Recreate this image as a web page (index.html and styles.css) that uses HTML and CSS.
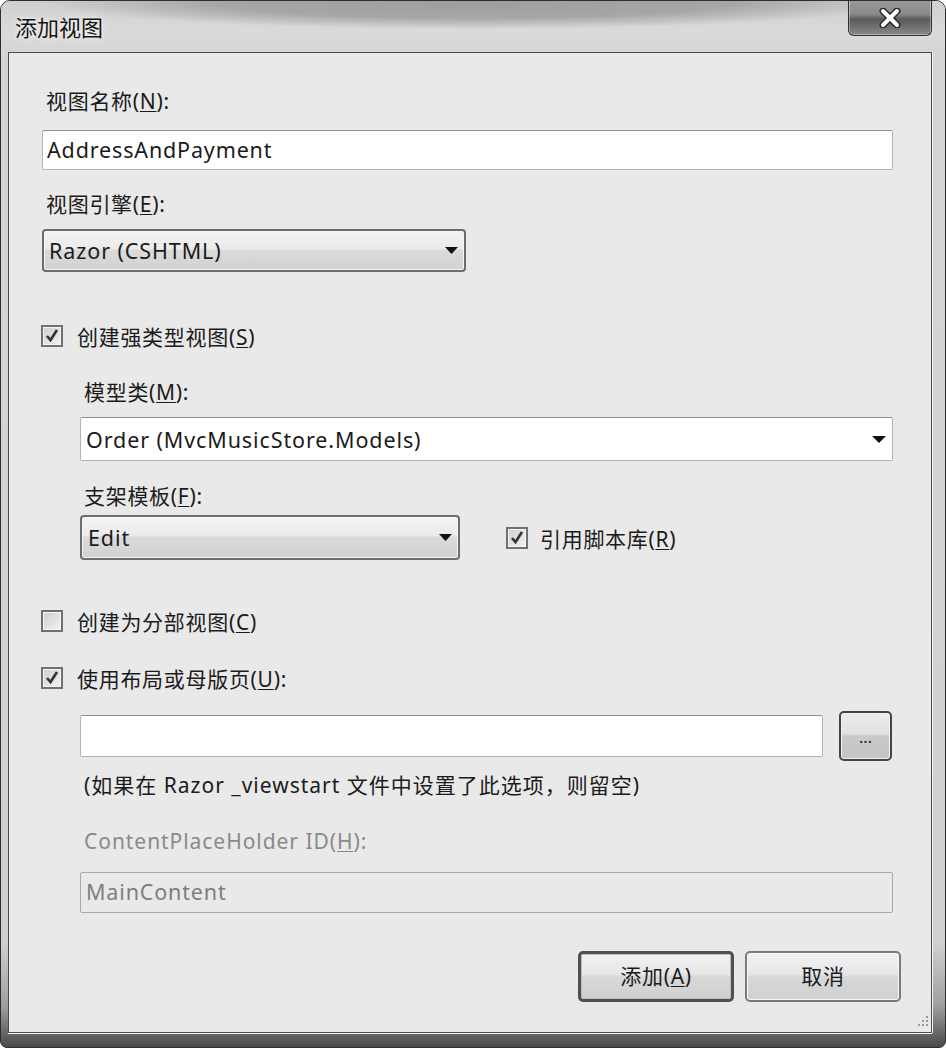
FILE: index.html
```html
<!DOCTYPE html>
<html lang="zh-CN">
<head>
<meta charset="utf-8">
<title>添加视图</title>
<link rel="stylesheet" href="styles.css">
</head>
<body>
<div class="window">
  <div class="titlebar">
    <span class="title">添加视图</span>
    <div class="close">
      <svg width="24" height="20" viewBox="0 0 24 20">
        <path d="M5 3 L19 17 M19 3 L5 17" stroke="#2a2a2a" stroke-width="7" stroke-linecap="round"/>
        <path d="M5 3 L19 17 M19 3 L5 17" stroke="#fff" stroke-width="4" stroke-linecap="round"/>
      </svg>
    </div>
  </div>
  <div class="client">
    <div class="label">视图名称(<u>N</u>):</div>
    <div class="textbox tb-name">AddressAndPayment</div>
    <div class="label l-engine">视图引擎(<u>E</u>):</div>
    <div class="select sel-engine">
      <span>Razor (CSHTML)</span>
      <svg class="arrow" width="13" height="7" viewBox="0 0 13 7"><path d="M0 0 H13 L6.5 7 Z" fill="#111"/></svg>
    </div>
    <div class="check row-strong"><span class="box checked"><svg width="16" height="16" viewBox="0 0 16 16"><path d="M3 8 L6.5 12 L13 2" stroke="#333" stroke-width="2.6" fill="none"/></svg></span><span>创建强类型视图(<u>S</u>)</span></div>
    <div class="indent">
      <div class="label l-model">模型类(<u>M</u>):</div>
      <div class="combo">
        <span>Order (MvcMusicStore.Models)</span>
        <svg class="arrow" width="14" height="7" viewBox="0 0 14 7"><path d="M0 0 H14 L7 7 Z" fill="#111"/></svg>
      </div>
      <div class="label l-tmpl">支架模板(<u>F</u>):</div>
      <div class="row-scaffold">
        <div class="select sel-tmpl">
          <span>Edit</span>
          <svg class="arrow" width="13" height="7" viewBox="0 0 13 7"><path d="M0 0 H13 L6.5 7 Z" fill="#111"/></svg>
        </div>
        <div class="check check-lib"><span class="box checked"><svg width="16" height="16" viewBox="0 0 16 16"><path d="M3 8 L6.5 12 L13 2" stroke="#333" stroke-width="2.6" fill="none"/></svg></span><span>引用脚本库(<u>R</u>)</span></div>
      </div>
    </div>
    <div class="check row-partial"><span class="box"></span><span>创建为分部视图(<u>C</u>)</span></div>
    <div class="check row-layout-check"><span class="box checked"><svg width="16" height="16" viewBox="0 0 16 16"><path d="M3 8 L6.5 12 L13 2" stroke="#333" stroke-width="2.6" fill="none"/></svg></span><span>使用布局或母版页(<u>U</u>):</span></div>
    <div class="indent">
      <div class="row-layout">
        <div class="textbox tb-layout"></div>
        <div class="browse">...</div>
      </div>
      <div class="note">(如果在 Razor _viewstart 文件中设置了此选项，则留空)</div>
      <div class="label disabled l-cph">ContentPlaceHolder ID(<u>H</u>):</div>
      <div class="textbox tb-disabled">MainContent</div>
    </div>
    <div class="actions">
      <div class="btn btn-default">添加(<u>A</u>)</div>
      <div class="btn">取消</div>
    </div>
    <svg class="grip" width="14" height="14" viewBox="0 0 14 14">
      <g fill="#9a9a9a">
        <rect x="11" y="1" width="2" height="2"/>
        <rect x="7" y="5" width="2" height="2"/><rect x="11" y="5" width="2" height="2"/>
        <rect x="3" y="9" width="2" height="2"/><rect x="7" y="9" width="2" height="2"/><rect x="11" y="9" width="2" height="2"/>
      </g>
    </svg>
  </div>
</div>
</body>
</html>
```
FILE: styles.css
```css
html, body {
  margin: 0;
  padding: 0;
  background: #ffffff;
}

body {
  font-family: "Noto Sans", "Noto Sans CJK SC", sans-serif;
  font-size: 21px;
  letter-spacing: 0.7px;
  color: #1b1b1b;
}

u {
  text-decoration: underline;
  text-underline-offset: 2px;
  text-decoration-thickness: 1px;
}

.window {
  box-sizing: border-box;
  width: 946px;
  height: 1048px;
  border: 1px solid #2e2e2e;
  border-radius: 10px 10px 7px 7px;
  background: linear-gradient(to bottom, #d6d6d6 0, #d0d0d0 90%, #a0a0a0 96%, #4a4a4a 100%);
  padding: 0 13px 14px 7px;
  display: flex;
  flex-direction: column;
  overflow: hidden;
}

.titlebar {
  height: 51px;
  position: relative;
  margin: 0 -13px 0 -7px;
  padding: 0 13px 0 7px;
  background:
    radial-gradient(ellipse 46% 28px at 50% 0, #9e9e9e 0, #a6a6a6 60%, rgba(200,200,200,0) 100%),
    linear-gradient(to bottom, #cfcfcf, #dadada 60%, #d6d6d6);
}

.title {
  position: absolute;
  left: 14px;
  top: 11px;
  font-size: 22px;
  letter-spacing: 0;
  line-height: 30px;
  color: #141414;
  text-shadow: 0 0 6px #f4f4f4, 0 0 3px #f4f4f4;
}

.close {
  position: absolute;
  left: 847px;
  top: -1px;
  width: 84px;
  height: 36px;
  box-sizing: border-box;
  border: 1px solid #303030;
  border-top: none;
  border-radius: 0 0 6px 6px;
  background: linear-gradient(to bottom, #9a9a9a 0, #8a8a8a 40%, #5a5a5a 55%, #6e6e6e 75%, #8a8a8a 100%);
  box-shadow: inset 0 0 0 1px rgba(255,255,255,0.35);
  display: flex;
  align-items: center;
  justify-content: center;
}

.client {
  flex: 1;
  position: relative;
  background: #e9e9e9;
  border: 1px solid #4a4a4a;
  box-shadow: 0 1px 0 #f4f4f4, 1px 0 0 #f4f4f4;
  padding: 36px 38px 0 33px;
  display: flex;
  flex-direction: column;
}

.label {
  height: 24px;
  line-height: 24px;
  padding-left: 4px;
  white-space: nowrap;
}

.textbox {
  box-sizing: border-box;
  height: 40px;
  background: #ffffff;
  border: 1px solid #b4b4b4;
  border-top-color: #8e8e8e;
  border-radius: 2px;
  padding-left: 4px;
  line-height: 38px;
  white-space: nowrap;
  font-size: 21.5px;
  letter-spacing: 0.85px;
}

.tb-name {
  margin-top: 17px;
}

.l-engine {
  margin-top: 22px;
}

.select {
  box-sizing: border-box;
  border: 2px solid #6c6c6c;
  border-radius: 4px;
  background: linear-gradient(to bottom, #f3f3f3 0, #ebebeb 45%, #dadada 50%, #d2d2d2 100%);
  box-shadow: inset 0 0 0 1px #f6f6f6;
  display: flex;
  align-items: center;
  justify-content: space-between;
  padding: 0 6px 0 5px;
  white-space: nowrap;
  font-size: 21.5px;
  letter-spacing: 0.9px;
}

.sel-engine {
  margin-top: 13px;
  width: 424px;
  height: 43px;
}

.check {
  display: flex;
  align-items: center;
  height: 24px;
  white-space: nowrap;
}

.box {
  box-sizing: border-box;
  flex: none;
  width: 22px;
  height: 22px;
  border: 2px solid #707070;
  background: linear-gradient(135deg, #cfcfcf, #f2f2f2);
  box-shadow: inset 0 0 0 1px #f5f5f5;
  margin-right: 14px;
  display: flex;
  align-items: center;
  justify-content: center;
}

.row-strong {
  margin-top: 52px;
  margin-left: -1px;
}

.indent {
  margin-left: 38px;
  display: flex;
  flex-direction: column;
}

.l-model {
  margin-top: 32px;
}

.combo {
  box-sizing: border-box;
  margin-top: 13px;
  height: 44px;
  background: #ffffff;
  border: 1px solid #b4b4b4;
  border-top-color: #8e8e8e;
  border-radius: 2px;
  padding: 0 6px 0 5px;
  display: flex;
  align-items: center;
  justify-content: space-between;
  white-space: nowrap;
  font-size: 21.5px;
  letter-spacing: 0.9px;
}

.l-tmpl {
  margin-top: 23px;
}

.row-scaffold {
  margin-top: 7px;
  display: flex;
  align-items: center;
}

.sel-tmpl {
  width: 380px;
  height: 45px;
  padding-left: 6px;
}

.check-lib {
  margin-left: 46px;
}

.check-lib .box {
  margin-right: 12px;
}

.row-partial {
  margin-top: 49px;
  margin-left: -1px;
}

.row-layout-check {
  margin-top: 33px;
  margin-left: -1px;
}

.row-layout {
  margin-top: 21px;
  display: flex;
  align-items: center;
  gap: 16px;
}

.tb-layout {
  width: 743px;
  height: 42px;
}

.browse {
  box-sizing: border-box;
  width: 53px;
  height: 50px;
  border: 2px solid #444444;
  border-radius: 5px;
  background: linear-gradient(to bottom, #ececec 0, #e2e2e2 45%, #cacaca 50%, #c4c4c4 100%);
  box-shadow: inset 0 0 0 1px #f2f2f2;
  font-size: 16px;
  line-height: 48px;
  text-align: center;
  letter-spacing: 0;
  color: #222;
}

.note {
  margin-top: 12px;
  height: 24px;
  line-height: 24px;
  padding-left: 4px;
  white-space: nowrap;
  letter-spacing: 1px;
}

.disabled {
  color: #8a8a8a;
}

.l-cph {
  margin-top: 32px;
  letter-spacing: 0.95px;
}

.tb-disabled {
  margin-top: 19px;
  height: 41px;
  background: #e9e9e9;
  border: 1px solid #a8a8a8;
  color: #7e7e7e;
  padding-left: 5px;
}

.actions {
  margin-top: 38px;
  margin-right: -8px;
  display: flex;
  justify-content: flex-end;
  gap: 11px;
}

.btn {
  box-sizing: border-box;
  width: 156px;
  height: 51px;
  border: 2px solid #7a7a7a;
  border-radius: 5px;
  background: linear-gradient(to bottom, #f1f1f1 0, #e7e7e7 45%, #d8d8d8 50%, #d0d0d0 100%);
  box-shadow: inset 0 0 0 1px #f8f8f8;
  text-align: center;
  line-height: 47px;
  white-space: nowrap;
}

.btn-default {
  border: 3px solid #505050;
  line-height: 45px;
  box-shadow: inset 0 0 0 1px #bdbdbd;
}

.grip {
  position: absolute;
  right: 2px;
  bottom: 3px;
}
```
